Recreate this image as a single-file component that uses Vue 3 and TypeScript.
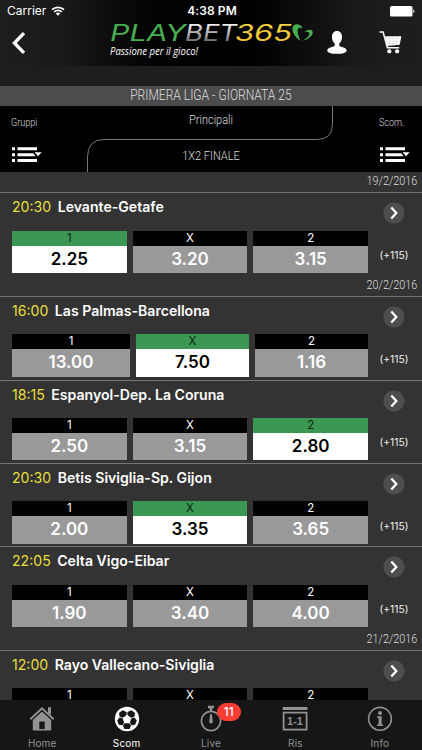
<script setup lang="ts">
interface Odd { label: string; value: string; on?: boolean }
interface Match { time: string; teams: string; odds: Odd[]; date?: string; wide?: boolean }

const row = (time: string, teams: string, values: string[], selected: number, date?: string, wide = false): Match => ({
  time, teams, date, wide,
  odds: values.map((value, i) => ({ label: ['1', 'X', '2'][i], value, on: i === selected })),
})

const matches: Match[] = [
  row('20:30', 'Levante-Getafe', ['2.25', '3.20', '3.15'], 0, '20/2/2016'),
  row('16:00', 'Las Palmas-Barcellona', ['13.00', '7.50', '1.16'], 1, undefined, true),
  row('18:15', 'Espanyol-Dep. La Coruna', ['2.50', '3.15', '2.80'], 2),
  row('20:30', 'Betis Siviglia-Sp. Gijon', ['2.00', '3.35', '3.65'], 1),
  row('22:05', 'Celta Vigo-Eibar', ['1.90', '3.40', '4.00'], -1, '21/2/2016'),
]
const tabs = ['Home', 'Scom', 'Live', 'Ris', 'Info']
</script>

<template>
  <div class="screen">
    <header class="top">
      <div class="status">
        <div class="carrier">
          <span>Carrier</span>
          <svg width="14" height="10" viewBox="0 0 14 10">
            <path d="M1 3.7a8.7 8.7 0 0 1 12 0M3.1 6a5.6 5.6 0 0 1 7.8 0" fill="none" stroke="#fff" stroke-width="1.7" />
            <path d="M4.8 7.5a3.3 3.3 0 0 1 4.4 0L7 9.8z" fill="#fff" />
          </svg>
        </div>
        <span class="clock">4:38 PM</span>
        <svg class="battery" width="25" height="11" viewBox="0 0 25 11">
          <rect width="22.5" height="10.5" rx="1.6" fill="#fff" />
          <path d="M23.3 3.5c1.6.4 1.6 3.1 0 3.5z" fill="#fff" />
        </svg>
      </div>
      <div class="nav">
        <svg class="back" width="14" height="22" viewBox="0 0 14 22"><path d="M12 1.2 2.4 11 12 20.8" fill="none" stroke="#fff" stroke-width="3.3" /></svg>
        <svg class="logo" width="206" height="40" viewBox="0 0 206 40">
          <defs>
            <linearGradient id="silver" x1="0" y1="0" x2="0" y2="1"><stop offset=".2" stop-color="#eee" /><stop offset=".8" stop-color="#777" /></linearGradient>
            <linearGradient id="gold" x1="0" y1="0" x2="0" y2="1"><stop offset="0" stop-color="#f6d84d" /><stop offset="1" stop-color="#edbf25" /></linearGradient>
          </defs>
          <g class="brand">
            <text x="0" y="19" textLength="76" lengthAdjust="spacingAndGlyphs" fill="#48ad50">PLAY</text>
            <text x="75" y="19" textLength="52" lengthAdjust="spacingAndGlyphs" fill="url(#silver)">BET</text>
            <text x="125" y="19" textLength="57" lengthAdjust="spacingAndGlyphs" fill="url(#gold)">365</text>
          </g>
          <path d="M190.500 18.800C180.500 12 180.500 2 187 2.200c3.500.2 5.300 2.600 5.300 4.600-3.500-2.600-7.500-1-1.800 12z" fill="#48ad50" />
          <path d="M192.500 19c5.500-1.200 10.500-5.500 10.300-8.700-.3-3.300-5-3.300-8.300-.3 4.300-1 5.500.8 4.500 3-1 2.300-3.700 4-6.500 6z" fill="#48ad50" />
          <text class="slogan" x="0" y="32.500" textLength="88" lengthAdjust="spacingAndGlyphs">Passione per il gioco!</text>
        </svg>
        <svg class="user" width="20" height="23" viewBox="0 0 20 23"><path d="M10 0c3.300 0 5 2.400 5 5.900 0 2.900-1 5.200-2.700 6.400v1.900c0 1 1.200 1.400 3.300 2 2.600.7 4 1.600 4 3.500 0 2-4 3.100-9.600 3.100S.3 21.700.3 19.700c0-1.900 1.500-2.800 4.100-3.500 2.100-.6 3.300-1 3.300-2v-1.900C6 11.100 5 8.800 5 5.900 5 2.400 6.700 0 10 0z" fill="#fff" /></svg>
        <svg class="cart" width="23" height="23" viewBox="0 0 23 23">
          <path d="M.5 1h3.600l4.300 15.800h11.800" fill="none" stroke="#fff" stroke-width="1.500" />
          <path d="M6 5.200h16.400l-1.700 8.500L8.200 15z" fill="#fff" />
          <path d="M7 7.700h14.500M7.700 10.100H21M8 12.400h13M10.500 5v10M14 5v10M17.500 5v9.500" stroke="#bbb" stroke-width=".3" />
          <circle cx="10.300" cy="20.300" r="2.100" fill="#fff" /><circle cx="18.100" cy="20.300" r="2.100" fill="#fff" />
        </svg>
      </div>
    </header>
    <div class="league"><span class="narrow">PRIMERA LIGA - GIORNATA 25</span></div>
    <section class="filters">
      <svg class="curve" width="422" height="66" viewBox="0 0 422 66"><path d="M332.500 0V18Q332.500 33.500 317 33.500H104Q87.500 33.500 87.500 51V66" fill="none" stroke="#777" /></svg>
      <div v-for="side in ['Gruppi', 'Scom.']" :key="side" class="side" :class="{ right: side !== 'Gruppi' }">
        <span class="narrow">{{ side }}</span>
        <svg width="30" height="16" viewBox="0 0 30 16">
          <path d="M0 .3h3v3H0zM0 6.200h3v3H0zM0 12h3v3H0zM5.500.3H25v3H5.500zM5.500 6.200h15.800l2.400 3H5.500zM5.500 12H25v3H5.500zM22.500 5.300h7.200l-3.600 4z" fill="#fff" />
        </svg>
      </div>
      <div class="middle"><span class="narrow">Principali</span><span class="narrow market">1X2 FINALE</span></div>
    </section>
    <main class="list">
      <div class="date"><span class="narrow">19/2/2016</span></div>
      <template v-for="m in matches" :key="m.teams">
        <article class="match">
          <div class="title">
            <h2><span class="time">{{ m.time }}</span><b>{{ m.teams }}</b></h2>
            <svg class="go" width="22" height="22" viewBox="0 0 22 22"><circle cx="11" cy="11" r="10.600" fill="#4e4e4e" /><path d="m8.300 5.500 5 5.500-5 5.500" fill="none" stroke="#fff" stroke-width="2.300" /></svg>
          </div>
          <div class="odds">
            <div class="boxes" :class="{ wide: m.wide }">
              <div v-for="o in m.odds" :key="o.label" class="box" :class="{ on: o.on }">
                <span class="label">{{ o.label }}</span><strong>{{ o.value }}</strong>
              </div>
            </div>
            <span class="more">(+115)</span>
          </div>
        </article>
        <div v-if="m.date" class="date"><span class="narrow">{{ m.date }}</span></div>
      </template>
      <article class="match last">
        <div class="title">
          <h2><span class="time">12:00</span><b>Rayo Vallecano-Siviglia</b></h2>
          <svg class="go" width="22" height="22" viewBox="0 0 22 22"><circle cx="11" cy="11" r="10.600" fill="#4e4e4e" /><path d="m8.300 5.500 5 5.500-5 5.500" fill="none" stroke="#fff" stroke-width="2.300" /></svg>
        </div>
        <div class="boxes">
          <span v-for="l in ['1', 'X', '2']" :key="l" class="label">{{ l }}</span>
        </div>
      </article>
    </main>
    <nav class="tabs">
      <div v-for="t in tabs" :key="t" class="tab" :class="{ active: t === 'Scom' }">
        <svg v-if="t === 'Home'" width="26" height="26" viewBox="0 0 26 26">
          <path d="M1.300 13.300 13 2.300 24.700 13.300" fill="none" stroke="#929292" stroke-width="1.900" /><path d="M19 1.200h3v8l-3-3z" fill="#929292" />
          <path d="M13 5.500 3.800 14v10.500h18.400V14zM10.300 15.500h5.400v7.500h-5.400z" fill="#929292" fill-rule="evenodd" />
        </svg>
        <svg v-else-if="t === 'Scom'" width="26" height="26" viewBox="0 0 26 26">
          <circle cx="13" cy="13" r="12.200" fill="#fff" />
          <path d="M8.500 4.200 13 6.300l4.500-2.100 3.500 2.700-.7 4.300 2.500 3.300-1.700 4.300-4 .6-1.600 3.600H10.500l-1.600-3.600-4-.6-1.700-4.300 2.500-3.300L5 6.900z" fill="#161616" />
          <path d="m13 8.800 4.400 3.200-1.700 5.200h-5.400l-1.700-5.200z" fill="#fff" />
          <path d="M13 4.500V10M8.800 12.100 3.500 10.500M17.200 12.100l5.300-1.600M10.400 17l-3.200 4.500M15.600 17l3.200 4.500" stroke="#fff" stroke-width=".8" />
        </svg>
        <svg v-else-if="t === 'Live'" width="26" height="26" viewBox="0 0 26 26">
          <circle cx="13" cy="15" r="9.600" fill="none" stroke="#929292" stroke-width="1.700" /><path d="M10 1h6M13 1v4M20 6l2 2" stroke="#929292" stroke-width="2.400" />
          <path d="m12 8.500 1-.5 1 .5.700 6.500a1.800 1.800 0 1 1-3.400 0z" fill="#929292" />
        </svg>
        <svg v-else-if="t === 'Ris'" width="26" height="26" viewBox="0 0 26 26">
          <path d="M.7 1h24.800v3H.7z" fill="#929292" /><rect x="1.600" y="6.600" width="23" height="17" fill="none" stroke="#929292" stroke-width="1.800" />
          <text class="score" x="13" y="19" text-anchor="middle">1-1</text>
        </svg>
        <svg v-else width="26" height="26" viewBox="0 0 26 26">
          <circle cx="13" cy="12.800" r="11.400" fill="none" stroke="#929292" stroke-width="1.600" /><circle cx="13" cy="6.900" r="2" fill="#929292" />
          <path d="M10 10.300h4.700v8.200h1.500V20H10v-1.500h1.600v-6.700H10z" fill="#929292" />
        </svg>
        <span>{{ t }}</span>
        <i v-if="t === 'Live'" class="badge">11</i>
      </div>
    </nav>
  </div>
</template>

<style>
body { margin: 0; background: #333; }
</style>
<style scoped>
* { box-sizing: border-box; }
svg { display: block; flex: none; overflow: visible; }
.screen { width: 422px; height: 750px; display: flex; flex-direction: column; overflow: hidden; background: #1e1e1c; color: #fff; font-family: Inter, "Liberation Sans", sans-serif; }
.top { height: 66px; flex: none; background: linear-gradient(90deg, #1e1e1d 0, #1a1a1a 14%, #030303 36%, #000 60%, #1a1a1a 84%, #1e1e1d 100%); }
.status { height: 22px; display: grid; grid-template-columns: 1fr auto 1fr; align-items: center; padding: 0 7px; font-size: 12px; line-height: 22px; }
.carrier { display: flex; align-items: center; gap: 4.500px; }
.clock { font-weight: 600; letter-spacing: .1px; padding-left: 2px; }
.battery { justify-self: end; }
.nav { display: flex; height: 44px; padding-left: 12px; align-items: flex-start; }
.back { margin-top: 10px; }
.logo { margin-left: 84px; }
.brand { font: italic 400 22.500px Inter, sans-serif; }
.slogan { font: italic 400 11.500px "Open Sans", sans-serif; fill: #fff; }
.user { margin: 9px 0 0 11px; }
.cart { margin: 9px 0 0 32px; }
.narrow { display: inline-block; transform: scaleX(.86); transform-origin: center; }
.league { margin-top: 20px; height: 20px; flex: none; background: #4c4c4c; text-align: center; font: 300 14px/19px Roboto, sans-serif; color: #ddd; }
.filters { position: relative; height: 66px; flex: none; background: #000; font-family: Roboto, sans-serif; font-weight: 300; display: grid; grid-template-columns: 87px 1fr 87px; }
.curve { position: absolute; inset: 0; }
.side { grid-column: 1; grid-row: 1; padding: 10px 0 0 10.500px; font-size: 10.500px; line-height: 14px; color: #ddd; }
.side .narrow { display: block; transform-origin: left; }
.side svg { margin: 16.500px 0 0 1.500px; }
.side.right { grid-column: 3; padding-left: 44px; }
.side.right svg { margin-left: 1px; }
.middle { grid-column: 2; grid-row: 1; display: flex; flex-direction: column; text-align: center; font-size: 12.500px; line-height: 16px; padding-top: 6px; color: #ddd; }
.middle .narrow { transform: scaleX(.88); }
.market { margin-top: 20px; }
.list { flex: 1; min-height: 0; overflow: hidden; background: #333; }
.date { height: 20.400px; text-align: right; padding-right: 5px; font: 300 12px/19px Roboto, sans-serif; color: #ddd; }
.date .narrow { transform: scaleX(.9); transform-origin: right; }
.match { height: 83.400px; border-top: 1px solid #757575; padding: 0 0 0 12px; }
.title { display: flex; height: 37.200px; justify-content: space-between; padding-right: 17px; }
.title h2 { margin: 0; font-size: 14.100px; line-height: 27px; font-weight: 600; display: flex; gap: 6.500px; }
.title b { font-weight: 600; }
.time { color: #e8df3b; font-weight: 400; }
.go { margin-top: 9px; }
.odds { display: flex; height: 42.500px; }
.boxes { width: 356px; display: grid; grid-template-columns: repeat(3, 1fr); gap: 6px; }
.boxes.wide { grid-template-columns: 118px 113px 113px; }
.box { display: flex; flex-direction: column; background: #999; }
.label { height: 15px; background: #000; font-size: 11.500px; line-height: 15px; text-align: center; }
.box strong { font-size: 17px; line-height: 27.500px; font-weight: 600; text-align: center; }
.box.on { background: #fff; color: #000; }
.on .label { background: #3b9852; color: #082811; }
.more { margin: 16.500px 0 0 11.500px; font-size: 10.300px; line-height: 16px; color: #eee; }
.last { height: auto; }
.tabs { position: relative; height: 50px; flex: none; background: #161616; display: grid; grid-template-columns: repeat(5, 1fr); }
.tab { position: relative; display: flex; flex-direction: column; align-items: center; padding-top: 6px; color: #929292; font-size: 10px; }
.tab span { line-height: 12px; margin-top: 5px; letter-spacing: .15px; }
.active { color: #fff; }
.score { font: 700 11px "Liberation Sans", sans-serif; fill: #929292; }
.badge { position: absolute; left: 48px; top: 3px; width: 24px; height: 18px; border-radius: 9px; background: #fb3d35; color: #fff; font: 500 12px/18px Inter, sans-serif; text-align: center; }
</style>
